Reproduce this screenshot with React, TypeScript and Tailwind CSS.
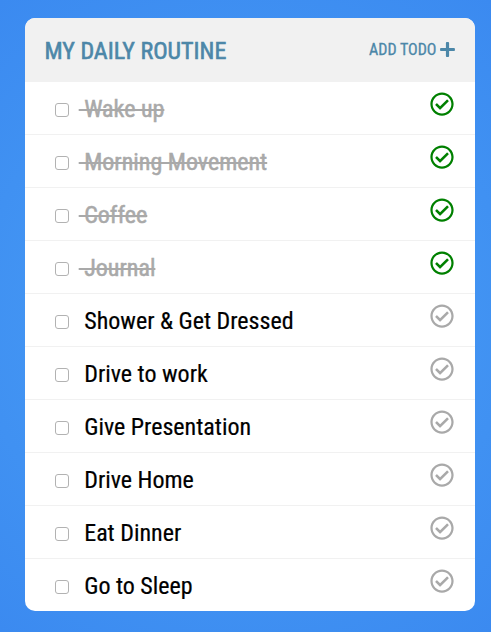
import { FaPlus, FaRegCheckCircle } from "react-icons/fa";

type Todo = { text: string; done: boolean };

const todos: Todo[] = [
  { text: "Wake up", done: true },
  { text: "Morning Movement", done: true },
  { text: "Coffee", done: true },
  { text: "Journal", done: true },
  { text: "Shower & Get Dressed", done: false },
  { text: "Drive to work", done: false },
  { text: "Give Presentation", done: false },
  { text: "Drive Home", done: false },
  { text: "Eat Dinner", done: false },
  { text: "Go to Sleep", done: false },
];

function TodoRow({ text, done }: Todo) {
  return (
    <li className="flex h-[53px] justify-between border-b border-[#f1f1f1] pr-[20.7px] pl-[30px] last:h-[52px] last:border-b-0">
      <label className="flex items-start">
        <input
          type="checkbox"
          className="mt-[21px] size-3.5 appearance-none rounded-[3px] border border-[#b2b2b2] bg-white"
        />
        <span
          className={
            done
              ? "ml-[9.7px] pt-[11px] text-2xl whitespace-pre text-[#a9a9a9] line-through decoration-2 [-webkit-text-stroke:0.5px_#a9a9a9]"
              : "ml-[9.7px] pt-[11px] text-2xl whitespace-pre text-black [-webkit-text-stroke:0.2px_#000]"
          }
        >
          {" " + text}
        </span>
      </label>
      <FaRegCheckCircle
        className={done ? "mt-[10px] size-6 text-[#008000]" : "mt-[10px] size-6 text-[#a9a9a9]"}
      />
    </li>
  );
}

export default function App() {
  return (
    <div className="h-[632px] w-[491px] bg-[radial-gradient(circle,#4a9ff6,#3b8af0)] pt-[18px] pr-4 pl-[25px] font-['Roboto_Condensed',Roboto,sans-serif]">
      <main className="overflow-hidden rounded-[10px] bg-white">
        <header className="flex h-16 items-center justify-between bg-[#f1f1f1] px-5 text-[#4c87a8]">
          <h1 className="-ml-[0.5px] pt-0.5 text-2xl [-webkit-text-stroke:0.6px_#4c87a8]">MY DAILY ROUTINE</h1>
          <button className="flex items-center gap-[3.6px] pb-px text-base [-webkit-text-stroke:0.3px_#4c87a8]">
            ADD TODO
            <FaPlus className="h-[17px] w-[15px]" />
          </button>
        </header>
        <ul>
          {todos.map((todo) => (
            <TodoRow key={todo.text} {...todo} />
          ))}
        </ul>
      </main>
    </div>
  );
}
